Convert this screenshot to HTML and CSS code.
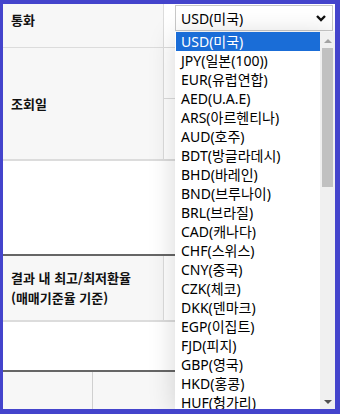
FILE: index.html
```html
<!DOCTYPE html>
<html lang="ko">
<head>
    <meta charset="UTF-8">
    <title>환율 조회</title>
    <link rel="stylesheet" href="styles.css">
</head>
<body>
<div class="frame">
    <div class="search">
        <div class="row row-currency">
            <div class="th th-top">통화</div>
            <div class="td td-select">
                <div class="select">
                    <span>USD(미국)</span>
                    <svg class="chevron" width="10" height="7" viewBox="0 0 10 7">
                        <polyline points="1,1 5,5 9,1" fill="none" stroke="#111" stroke-width="2.4"/>
                    </svg>
                </div>
            </div>
        </div>
        <div class="row row-date">
            <div class="th">조회일</div>
            <div class="td td-split">
                <div class="sub sub-first"></div>
                <div class="sub"></div>
            </div>
        </div>
    </div>
    <div class="blank blank-tall"></div>
    <div class="result">
        <div class="row row-range">
            <div class="th">결과 내 최고/최저환율<br>(매매기준율 기준)</div>
            <div class="td"></div>
        </div>
    </div>
    <div class="blank blank-short"></div>
    <div class="grid-head">
        <div class="col col-first"></div>
        <div class="col"></div>
    </div>

    <div class="listbox">
        <ul class="options">
            <li class="selected">USD(미국)</li>
            <li>JPY(일본(100))</li>
            <li>EUR(유럽연합)</li>
            <li>AED(U.A.E)</li>
            <li>ARS(아르헨티나)</li>
            <li>AUD(호주)</li>
            <li>BDT(방글라데시)</li>
            <li>BHD(바레인)</li>
            <li>BND(브루나이)</li>
            <li>BRL(브라질)</li>
            <li>CAD(캐나다)</li>
            <li>CHF(스위스)</li>
            <li>CNY(중국)</li>
            <li>CZK(체코)</li>
            <li>DKK(덴마크)</li>
            <li>EGP(이집트)</li>
            <li>FJD(피지)</li>
            <li>GBP(영국)</li>
            <li>HKD(홍콩)</li>
            <li>HUF(헝가리)</li>
        </ul>
        <div class="scrollbar">
            <span class="arrow arrow-up"></span>
            <span class="thumb"></span>
            <span class="arrow arrow-down"></span>
        </div>
    </div>
</div>
</body>
</html>
```

FILE: styles.css
```css
body{
    margin: 0;
    font-family: "Noto Sans", "Noto Sans CJK KR", sans-serif;
}
.frame{
    position: relative;
    box-sizing: border-box;
    width: 340px;
    height: 414px;
    border-style: solid;
    border-color: #4444cc;
    border-width: 4px 5px 5px 3px;
    overflow: hidden;
    background: #fff;
}
.row{
    display: flex;
}
.th{
    box-sizing: border-box;
    width: 161px;
    flex: none;
    display: flex;
    align-items: center;
    padding-left: 8px;
    background: #f7f7f7;
    border-right: 1px solid #dcdcdc;
    font-family: "Noto Sans CJK KR", sans-serif;
    font-size: 13px;
    font-weight: 700;
    line-height: 20px;
    color: #111;
}
.th-top{
    align-items: flex-start;
    padding-top: 6px;
}
.td{
    flex: 1;
    background: #fff;
}
.row-currency{
    height: 43px;
    border-bottom: 1px solid #dcdcdc;
}
.td-select{
    padding: 1px 0 0 11px;
}
.select{
    box-sizing: border-box;
    width: 158px;
    height: 26px;
    display: flex;
    align-items: center;
    justify-content: space-between;
    padding: 0 4px 0 5px;
    border: 1px solid #c8c8c8;
    background: #fff;
    font-size: 14px;
    color: #000;
}
.chevron{
    margin-right: 2px;
}
.row-date{
    height: 111px;
    border-bottom: 2px solid #dcdcdc;
}
.td-split{
    display: flex;
    flex-direction: column;
}
.sub{
    flex: 1;
}
.sub-first{
    flex: none;
    height: 50px;
    border-bottom: 1px solid #dcdcdc;
}
.blank-tall{
    height: 93px;
}
.result{
    border-top: 2px solid #666;
}
.row-range{
    height: 64px;
    border-bottom: 2px solid #dcdcdc;
}
.blank-short{
    height: 48px;
}
.grid-head{
    display: flex;
    height: 40px;
    border-top: 2px solid #666;
    background: #f7f7f7;
}
.col{
    flex: 1;
}
.col-first{
    flex: none;
    width: 89px;
    border-right: 1px solid #d0d0d0;
}

/* open dropdown */
.listbox{
    position: absolute;
    left: 172px;
    top: 28px;
    width: 160px;
    height: 377px;
    display: flex;
    background: #fff;
    box-shadow: 0 3px 26px rgba(0,0,0,0.16);
}
.options{
    list-style: none;
    margin: 0;
    padding: 0 0 0 1px;
    flex: 1;
    overflow: hidden;
}
.options li{
    height: 19px;
    line-height: 19px;
    padding-left: 5px;
    font-size: 14px;
    color: #000;
    white-space: nowrap;
}
.options li.selected{
    background: #1a6dd7;
    color: #fff;
}
.scrollbar{
    position: relative;
    width: 15px;
    flex: none;
    background: #f0f0f0;
}
.thumb{
    position: absolute;
    left: 2px;
    top: 16px;
    width: 11px;
    height: 139px;
    background: #c1c1c1;
}
.arrow{
    position: absolute;
    left: 4px;
    width: 0;
    height: 0;
    border-left: 4px solid transparent;
    border-right: 4px solid transparent;
}
.arrow-up{
    top: 7px;
    border-bottom: 4px solid #a3a3a3;
}
.arrow-down{
    bottom: 5px;
    border-top: 4px solid #505050;
}
```
